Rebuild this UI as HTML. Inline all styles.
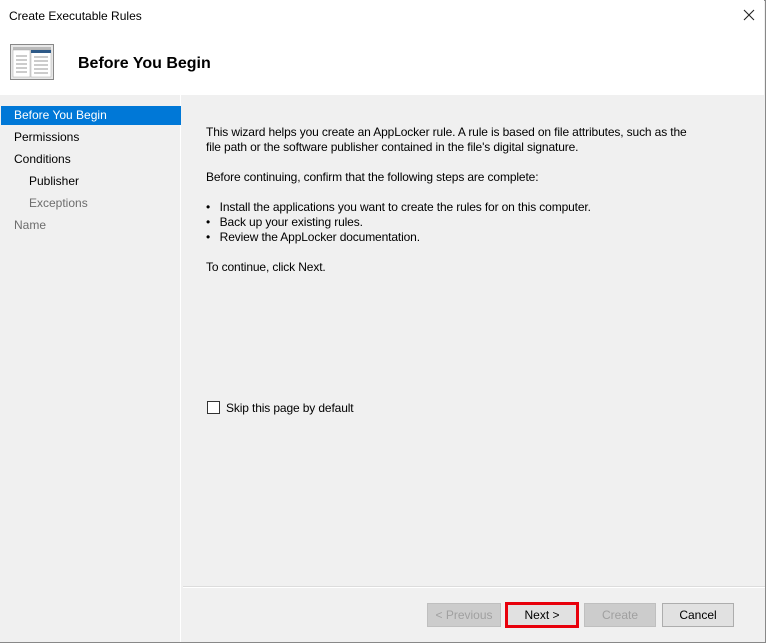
<!DOCTYPE html>
<html><head><style>
*{margin:0;padding:0;box-sizing:border-box}
body{width:766px;height:643px;background:#f0f0f0;font-family:"Liberation Sans",sans-serif;font-size:12px;color:#000;position:relative;overflow:hidden}
.win{position:absolute;left:0;top:0;width:766px;height:643px;border:1px solid #888;background:#f0f0f0}
.hdr{position:absolute;left:0;top:0;width:764px;height:95px;background:#fff}
.t{position:absolute;white-space:nowrap}
.b{letter-spacing:-0.13px}
.left{position:absolute;left:0;top:95px;width:181px;height:547px;background:#f0f0f0;border-right:1px solid #fff}
.sel{position:absolute;left:1px;top:106px;width:180px;height:19px;background:#0078d7}
.btn{position:absolute;top:603px;height:24px;border:1px solid #adadad;background:#e1e1e1;text-align:center;line-height:22px;font-size:12px}
.dis{color:#a0a0a0;background:#cccccc;border-color:#bfbfbf}
</style></head><body>
<div class="win"></div>
<div class="hdr"></div>
<div class="t" style="left:9px;top:9px">Create Executable Rules</div>
<svg style="position:absolute;left:743px;top:9px" width="12" height="12" viewBox="0 0 12 12"><path d="M1 1L11 11M11 1L1 11" stroke="#222" stroke-width="1.1"/></svg>
<svg style="position:absolute;left:10px;top:44px" width="45" height="36" viewBox="0 0 45 36">
<rect x="0.5" y="0.5" width="43" height="35" fill="#e8e8e8" stroke="#888"/>
<rect x="3" y="3" width="38" height="3" fill="#bbb"/>
<rect x="3" y="6" width="17" height="27" fill="#fff" stroke="#aaa" stroke-width=".5"/>
<rect x="21" y="6" width="20" height="27" fill="#fff" stroke="#aaa" stroke-width=".5"/>
<rect x="21" y="6" width="20" height="3" fill="#2e5a88"/>
<g stroke="#999" stroke-width="1"><line x1="6" y1="12" x2="17" y2="12"/><line x1="6" y1="16" x2="17" y2="16"/><line x1="6" y1="20" x2="17" y2="20"/><line x1="6" y1="24" x2="17" y2="24"/><line x1="6" y1="28" x2="17" y2="28"/><line x1="24" y1="13" x2="38" y2="13"/><line x1="24" y1="17" x2="38" y2="17"/><line x1="24" y1="21" x2="38" y2="21"/><line x1="24" y1="25" x2="38" y2="25"/><line x1="24" y1="29" x2="38" y2="29"/></g>
</svg>
<div class="t" style="left:78px;top:55px;font-size:16px;font-weight:bold">Before You Begin</div>
<div class="left"></div>
<div class="sel"></div>
<div class="t" style="left:14px;top:108px;color:#fff">Before You Begin</div>
<div class="t" style="left:14px;top:130px">Permissions</div>
<div class="t" style="left:14px;top:152px">Conditions</div>
<div class="t" style="left:29px;top:174px">Publisher</div>
<div class="t" style="left:29px;top:196px;color:#6d6d6d">Exceptions</div>
<div class="t" style="left:14px;top:218px;color:#6d6d6d">Name</div>
<div class="t b" style="left:206px;top:125px;line-height:15px">This wizard helps you create an AppLocker rule. A rule is based on file attributes, such as the<br>file path or the software publisher contained in the file's digital signature.</div>
<div class="t b" style="left:206px;top:170px">Before continuing, confirm that the following steps are complete:</div>
<div class="t b" style="left:206px;top:200px;line-height:15px">•&nbsp;&nbsp;&nbsp;Install the applications you want to create the rules for on this computer.<br>•&nbsp;&nbsp;&nbsp;Back up your existing rules.<br>•&nbsp;&nbsp;&nbsp;Review the AppLocker documentation.</div>
<div class="t b" style="left:206px;top:260px">To continue, click Next.</div>
<div style="position:absolute;left:207px;top:401px;width:13px;height:13px;border:1px solid #333;background:#fff"></div>
<div class="t b" style="left:226px;top:401px">Skip this page by default</div>
<div style="position:absolute;left:183px;top:586px;width:582px;height:1px;background:#dcdcdc"></div>
<div style="position:absolute;left:183px;top:587px;width:582px;height:1px;background:#fff"></div>
<div class="btn dis" style="left:427px;width:74px">&lt; Previous</div>
<div class="btn" style="left:505px;width:74px;border:3px solid #e8000b;top:602px;height:26px;line-height:20px">Next &gt;</div>
<div class="btn dis" style="left:584px;width:72px">Create</div>
<div class="btn" style="left:662px;width:72px">Cancel</div>
</body></html>
